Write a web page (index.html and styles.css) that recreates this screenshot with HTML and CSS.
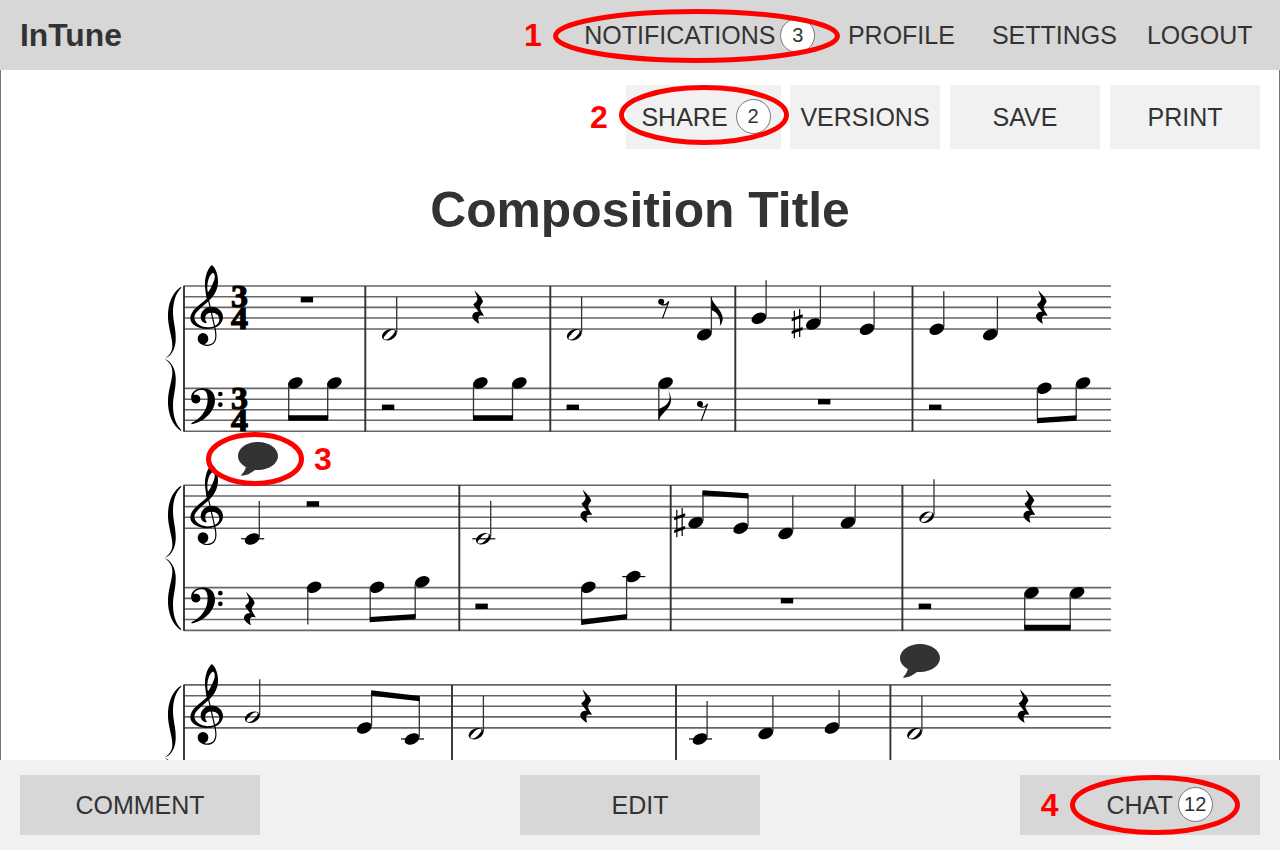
FILE: index.html
```html
<!DOCTYPE html>
<html lang="en">
<head>
<meta charset="utf-8">
<title>InTune</title>
<link rel="stylesheet" href="styles.css">
</head>
<body>
<div class="app">
  <header class="topbar">
    <div class="brand">InTune</div>
    <nav class="nav">
      <a class="nav-item nav-notifications">NOTIFICATIONS<span class="badge">3</span></a>
      <a class="nav-item nav-profile">PROFILE</a>
      <a class="nav-item nav-settings">SETTINGS</a>
      <a class="nav-item">LOGOUT</a>
    </nav>
  </header>

  <main class="page">
    <div class="toolbar">
      <button class="tool tool-share">SHARE<span class="badge">2</span></button>
      <button class="tool">VERSIONS</button>
      <button class="tool">SAVE</button>
      <button class="tool">PRINT</button>
    </div>
    <h1 class="title">Composition Title</h1>
    <svg class="score" viewBox="160 255 960 505" width="960" height="505">
      <defs>
        <ellipse id="head" rx="7.8" ry="5.2" transform="rotate(-25)"/>
        <g id="quarter"><use href="#head"/><path class="stem" d="M7.1-2V-38"/></g>
        <g id="half">
          <path fill-rule="evenodd" transform="rotate(-25)" d="M-7.8 0a7.8 5.2 0 1 0 15.6 0a7.8 5.2 0 1 0-15.6 0ZM-6.500 1.300C-5.800 4-1.500 3.700 1.600 2.200C4.700 .8 7.200-.4 6.500-2C5.500-4 1.500-3.600-1.600-2.200C-4.700-.8-6.900-.2-6.500 1.300Z"/>
          <path class="stem" d="M7.4-2V-38"/>
        </g>
        <path id="ledger" class="ledger" d="M-11 0H12"/>
        <rect id="rest" width="12.4" height="5.4"/>
        <path id="qrest" transform="scale(.3333) translate(-325 -105)" d="M313 106C325 118 338 130 339 140C334 148 328 155 330 160C333 170 340 176 342 183C328 179 320 184 328 206C315 200 306 190 307 182C309 172 320 168 326 171C320 162 312 155 310 148C318 142 324 135 322 128C320 120 315 112 313 106Z"/>
        <g id="erest" transform="scale(.3333)">
          <circle cx="-7" cy="9" r="9"/>
          <path class="pen" d="M-7 17C5 21 12 16 16 8L-3 59"/>
        </g>
        <g id="sharp" transform="scale(.3333)">
          <path class="pen" d="M-8-39V44M8-44V40"/>
          <path d="M-16-16L17-28V-19L-16-7ZM-16 22L17 10V19L-16 31Z"/>
        </g>
        <g id="system">
          <path class="line" d="M183.5 286H1111M183.5 296.8H1111M183.5 307.4H1111M183.5 318H1111M183.5 329H1111M183.5 388.4H1111M183.5 399.2H1111M183.5 409.8H1111M183.5 420.3H1111M183.5 431.2H1111"/>
          <path class="bar" d="M184 286V431.5"/>
          <g transform="translate(155 255) scale(.3333)">
            <path id="brace-half" d="M78 95C54 110 37 145 39 190C41 224 53 250 52 275C51 292 41 303 29 311C45 306 60 287 62 258C64 225 54 200 54 172C54 140 62 115 79 98Z"/>
            <use href="#brace-half" transform="matrix(1 0 0 -1 0 623)"/>
            <path fill-rule="evenodd" d="M170 30C155 45 149 70 150 92C151 108 153 118 155 131C135 149 106 165 106 190C106 208 128 222 155 222C185 222 204 207 204 186C204 168 188 155 170 155C150 155 137 170 137 186C137 196 144 204 154 205L155 202C147 192 149 174 168 173C184 172 193 181 193 194C192 210 175 217 158 217C135 216 119 203 118 188C118 169 149 153 169 130C184 113 190 95 189 75C188 55 180 36 170 30ZM174 53C182 58 180 72 175 82C170 96 163 107 159 112C154 96 158 62 174 53Z"/>
            <path class="pen" d="M157 120L180 220C188 255 178 271 155 271C145 270 137 265 133 258"/>
            <ellipse cx="144" cy="251" rx="16" ry="17"/>
            <path d="M110 437C103 413 122 400 145 400C168 400 181 415 180 438C178 472 145 501 110 508L109 504C137 492 158 465 158 433C158 415 152 405 142 405C127 405 118 411 116 420C130 416 137 424 136 434C135 448 114 449 110 437Z"/>
            <circle cx="196" cy="417" r="7"/><circle cx="196" cy="449" r="7"/>
          </g>
        </g>
        <path id="bubble" d="M0-14C11.500-14 20-7.500 20 0S11.500 14 0 14L-3 13.900C-7 16.500-9.500 19.200-16.800 19.700C-17.300 18.800-13 16-12.200 11C-17 8.500-20 4.500-20 0C-20-7.500-11.500-14 0-14Z"/>
      </defs>

      <!-- System 1 -->
      <use href="#system"/>
      <path class="bar" d="M365.300 286V431.500M550.300 286V431.500M735.300 286V431.500M912.500 286V431.500"/>
      <g class="meter">
        <text x="239.500" y="306.700" textLength="17" lengthAdjust="spacingAndGlyphs">3</text>
        <text x="239.500" y="328.700" textLength="17" lengthAdjust="spacingAndGlyphs">4</text>
        <text x="239.500" y="408.800" textLength="17" lengthAdjust="spacingAndGlyphs">3</text>
        <text x="239.500" y="431" textLength="17" lengthAdjust="spacingAndGlyphs">4</text>
      </g>
      <use href="#rest" x="300.700" y="297"/>
      <use href="#half" x="389.300" y="334.700"/>
      <use href="#qrest" x="478.300" y="290"/>
      <use href="#half" x="574.200" y="334.700"/>
      <use href="#erest" x="663.500" y="298.700"/>
      <use href="#quarter" x="704.300" y="334.700"/>
      <path d="M711.300 296.700C712.700 305 722.700 310 722.700 318.500C722.700 321.500 721 325 719.700 326C721.700 319 717.300 312 711.300 310Z"/>
      <use href="#quarter" x="759" y="318.300"/>
      <use href="#sharp" x="797" y="323.700"/>
      <use href="#quarter" x="813.300" y="324"/>
      <use href="#quarter" x="867" y="329.300"/>
      <use href="#quarter" x="936.700" y="329.300"/>
      <use href="#quarter" x="990.300" y="334.700"/>
      <use href="#qrest" x="1042" y="290"/>
      <use href="#head" x="295.300" y="383"/><use href="#head" x="334.300" y="383"/>
      <path class="stem" d="M288.700 385V418M327.700 385V418"/><path d="M288.200 415.300H328.200V420.700H288.200Z"/>
      <use href="#rest" x="381.900" y="404.600"/>
      <use href="#head" x="480.300" y="383"/><use href="#head" x="519.300" y="383"/>
      <path class="stem" d="M473.500 385V418M512.500 385V418"/><path d="M473 415.300H513V420.700H473Z"/>
      <use href="#rest" x="566.600" y="404.600"/>
      <use href="#head" x="665.500" y="383"/>
      <path class="stem" d="M658.800 385V420.500"/>
      <path d="M658.600 420.500V409C667 406 672.700 401 668 389.500C674 401 670 406.500 665 411.500C661.500 415 660 417 658.600 420.500Z"/>
      <use href="#erest" x="702.300" y="401"/>
      <use href="#rest" x="818" y="399"/>
      <use href="#rest" x="929" y="404.600"/>
      <use href="#head" x="1044.200" y="388.300"/><use href="#head" x="1083" y="383"/>
      <path class="stem" d="M1037.400 390V420M1076.200 385V418"/><path d="M1037 418L1076.600 415.300V420.700L1037 423.300Z"/>

      <!-- System 2 -->
      <use href="#system" y="199.200"/>
      <path class="bar" d="M459.300 485V631M670.700 485V631M902.400 485V631"/>
      <use href="#quarter" x="252.200" y="539"/><use href="#ledger" x="252.200" y="538.800"/>
      <use href="#rest" x="306.700" y="501.200"/>
      <use href="#half" x="483.300" y="538.800"/><use href="#ledger" x="483.300" y="538.800"/>
      <use href="#qrest" x="586.500" y="489.200"/>
      <use href="#sharp" x="679.500" y="522.700"/>
      <use href="#head" x="695.700" y="522.700"/><use href="#head" x="740.700" y="528.200"/>
      <path class="stem" d="M703 521V492M748 526V495"/><path d="M702.500 490.200L748.500 493.200V498.500L702.500 495.500Z"/>
      <use href="#quarter" x="785.700" y="533.500"/>
      <use href="#quarter" x="848" y="522.700"/>
      <use href="#half" x="926.600" y="517.300"/>
      <use href="#qrest" x="1029.500" y="489.200"/>
      <use href="#qrest" x="250" y="591.500"/>
      <use href="#head" x="314" y="587.300"/><path class="stem" d="M307.800 589V624.500"/>
      <use href="#head" x="377" y="587.300"/><use href="#head" x="422.200" y="581.800"/>
      <path class="stem" d="M370.200 589V619M415.200 584V617"/><path d="M369.700 617L415.700 614V619.300L369.700 622.300Z"/>
      <use href="#rest" x="475.400" y="603.600"/>
      <use href="#head" x="588.300" y="587.300"/><use href="#head" x="633.300" y="576.600"/><use href="#ledger" x="633.300" y="576.600"/>
      <path class="stem" d="M581.600 589V622M626.600 578V616"/><path d="M581.100 619.600L627.100 614V619.300L581.100 625Z"/>
      <use href="#rest" x="780.800" y="598"/>
      <use href="#rest" x="918.700" y="603.600"/>
      <use href="#head" x="1031.400" y="592.700"/><use href="#head" x="1077" y="592.700"/>
      <path class="stem" d="M1024.700 594V628M1070.200 594V628"/><path d="M1024.200 624.800H1070.700V630.500H1024.200Z"/>

      <!-- System 3 -->
      <use href="#system" y="398.900"/>
      <path class="bar" d="M452 685V760M676 685V760M890.400 685V760"/>
      <use href="#half" x="252.300" y="717.200"/>
      <use href="#head" x="364.300" y="728"/><use href="#head" x="412" y="739"/><use href="#ledger" x="412" y="739"/>
      <path class="stem" d="M371.600 726V693M419.300 737V698"/><path d="M371.100 690.300L419.800 696V701.300L371.100 695.700Z"/>
      <use href="#half" x="476" y="733.700"/>
      <use href="#qrest" x="586.300" y="689"/>
      <use href="#quarter" x="700" y="739"/><use href="#ledger" x="700" y="739"/>
      <use href="#quarter" x="765.800" y="733.500"/>
      <use href="#quarter" x="832" y="728"/>
      <use href="#half" x="914.500" y="733.700"/>
      <use href="#qrest" x="1023.700" y="689"/>

      <use href="#bubble" class="bubble" x="258" y="456"/>
      <use href="#bubble" class="bubble" x="920" y="658"/>
    </svg>
  </main>

  <footer class="bottombar">
    <button class="action">COMMENT</button>
    <button class="action">EDIT</button>
    <button class="action action-chat">CHAT<span class="badge">12</span></button>
  </footer>

  <svg class="callouts" viewBox="0 0 1280 850" width="1280" height="850">
    <g class="rings">
      <ellipse cx="696.500" cy="36" rx="141" ry="24.500"/>
      <ellipse cx="704" cy="115" rx="82.500" ry="27.500"/>
      <ellipse cx="255" cy="459" rx="46.500" ry="24.500"/>
      <ellipse cx="1155" cy="805" rx="82.500" ry="27.500"/>
    </g>
    <g class="marks">
      <text x="524" y="46">1</text>
      <text x="590" y="128">2</text>
      <text x="314" y="470">3</text>
      <text x="1040.700" y="816">4</text>
    </g>
  </svg>
</div>
</body>
</html>
```
FILE: styles.css
```css
* { box-sizing: border-box; }

body {
  margin: 0;
  font-family: "Liberation Sans", Arial, sans-serif;
  font-size: 25px;
  color: #333;
  background: #fff;
}

.app {
  position: relative;
  display: flex;
  flex-direction: column;
  width: 1280px;
  height: 850px;
  overflow: hidden;
}

.topbar {
  display: flex;
  flex: none;
  align-items: center;
  justify-content: space-between;
  height: 70px;
  padding: 0 27.5px 0 20px;
  background: #d7d7d7;
}

.brand { font-size: 31.8px; font-weight: bold; }

.nav { display: flex; align-items: center; }
.nav-item { display: flex; align-items: center; }
.nav-notifications { gap: 5px; margin-right: 32.5px; }
.nav-profile { margin-right: 37px; }
.nav-settings { margin-right: 30px; }

.badge {
  display: flex;
  flex: none;
  align-items: center;
  justify-content: center;
  width: 35px;
  height: 35px;
  border: 1px solid #797979;
  border-radius: 50%;
  background: #fff;
  font-size: 20px;
}

.page {
  display: flex;
  flex: none;
  flex-direction: column;
  align-items: center;
  height: 690px;
  border: solid #797979;
  border-width: 0 1px;
  overflow: hidden;
}

.toolbar {
  display: flex;
  align-self: flex-end;
  gap: 10px;
  padding: 15px 19px 0 0;
}

.tool,
.action {
  display: flex;
  align-items: center;
  justify-content: center;
  padding: 0;
  border: 0;
  font: inherit;
  color: inherit;
}

.tool { width: 150px; height: 64px; background: #f1f1f1; }
.tool-share { gap: 8px; width: 155px; margin-right: -1px; padding-left: 5px; }
.tool-share .badge { margin-bottom: 1px; }

.title {
  margin: 32px 0 0;
  font-size: 49.8px;
  line-height: 58px;
}

.score { flex: none; margin-top: 16px; }
.line { fill: none; stroke: #666; stroke-width: 1.6; }
.ledger { fill: none; stroke: #000; stroke-width: 1.2; }
.bar { fill: none; stroke: #333; stroke-width: 1.9; }
.stem { fill: none; stroke: #333; stroke-width: 1.3; }
.pen { fill: none; stroke: #000; stroke-width: 3.6; }
.bubble { fill: #333; }

.meter {
  font: bold 31px "Liberation Serif", serif;
  text-anchor: middle;
  stroke: #000;
  stroke-width: 1.1;
}

.bottombar {
  display: flex;
  flex: none;
  align-items: center;
  justify-content: space-between;
  height: 90px;
  padding: 0 20px;
  background: #f1f1f1;
}

.action { width: 240px; height: 60px; background: #d7d7d7; }
.action-chat { justify-content: flex-start; gap: 5px; padding-left: 86.5px; }
.action-chat .badge { margin-bottom: 1px; }

.callouts { position: absolute; top: 0; left: 0; pointer-events: none; }
.rings { fill: none; stroke: #f00; stroke-width: 5; }
.marks { fill: #f00; font-size: 32px; font-weight: bold; }
```
